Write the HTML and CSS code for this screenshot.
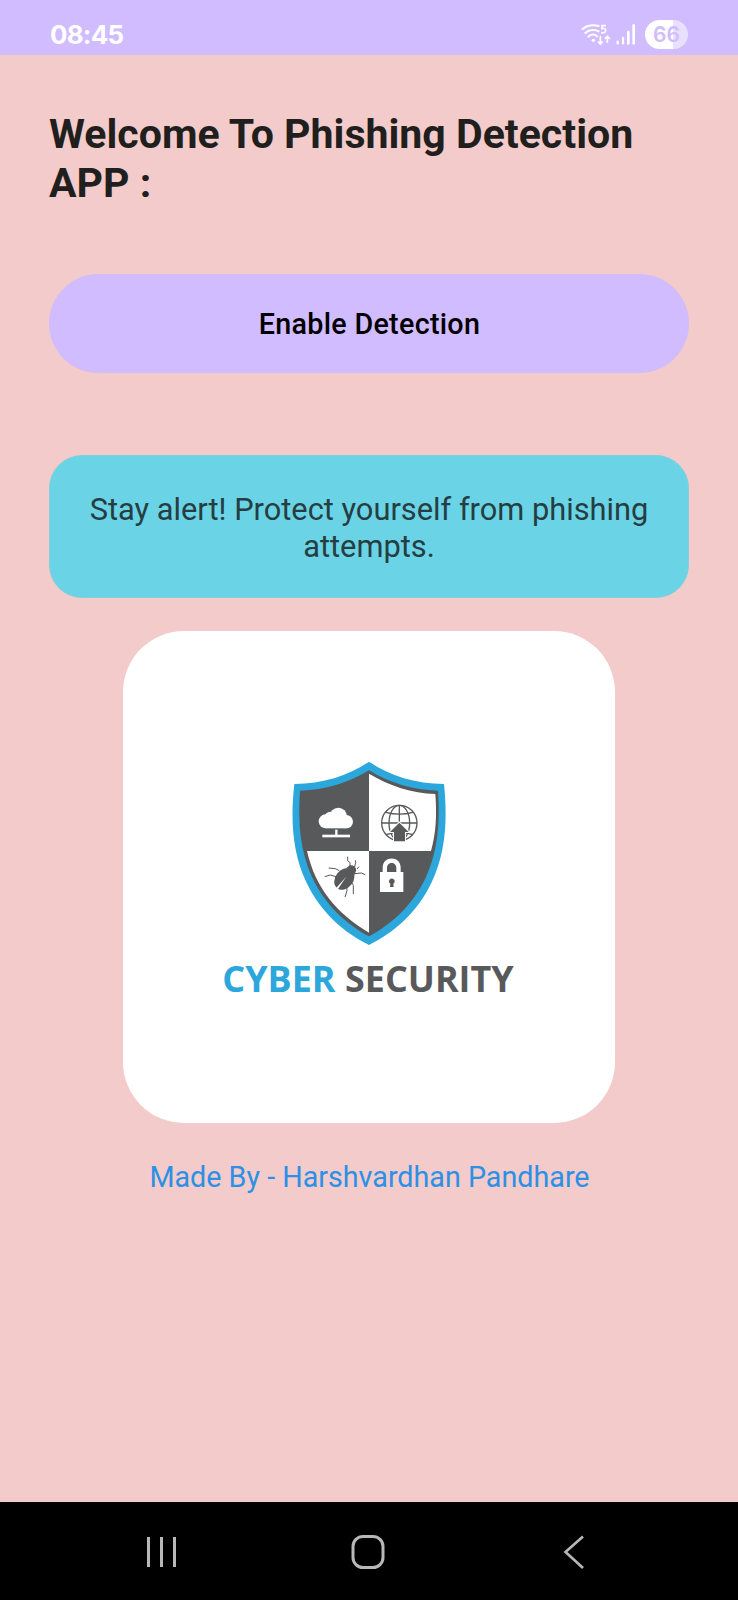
FILE: index.html
```html
<!DOCTYPE html>
<html lang="en">
<head>
<meta charset="utf-8">
<title>Phishing Detection</title>
<link rel="stylesheet" href="styles.css">
</head>
<body>
<div class="screen">
  <header class="status">
    <span class="clock">08:45</span>
    <div class="indicators">
      <svg class="wifi" viewBox="0 0 90 70" width="30" height="23.33">
        <g fill="none" stroke="#fff" stroke-width="6" stroke-linecap="round">
          <path d="M5 15C17 4 37 1 53 6"/>
          <path d="M13 27C23 17 42 15 53 22"/>
          <path d="M22 38C29 30 41 30 48 37"/>
          <path d="M58 38V59M52 54l6 6 6-6" stroke-width="5"/>
          <path d="M79 54V38M73 43l6-6 6 6" stroke-width="5"/>
        </g>
        <circle cx="37" cy="49" r="5" fill="#fff"/>
        <path d="M75 5H63V14Q75 12 74 20Q73 28 60 26" fill="none" stroke="#fff" stroke-width="5"/>
      </svg>
      <svg class="signal" viewBox="0 0 60 66" width="20" height="22">
        <g stroke="#fff" stroke-linecap="round">
          <path d="M5 53v5" stroke-width="7"/>
          <path d="M21 42v16" stroke-width="7"/>
          <path d="M37 24v34" stroke-width="8"/>
          <path d="M53 4v54" stroke-width="8"/>
        </g>
      </svg>
      <span class="battery">66</span>
    </div>
  </header>
  <main class="content">
    <h1 class="title">Welcome To Phishing Detection APP :</h1>
    <button class="enable">Enable Detection</button>
    <p class="notice">Stay alert! Protect yourself from phishing attempts.</p>
    <section class="logo">
      <svg class="shield" viewBox="0 0 540 600" width="180" height="200">
        <path fill="#2ba7dc" d="M267 35C330 78 405 101 492 102C503 210 497 308 455 397C412 488 341 549 267 585C193 549 122 488 79 397C37 308 31 210 43 102C129 101 204 78 267 35Z"/>
        <path fill="#58595b" d="M267 61C329 99 399 120 474 122C481 220 473 303 438 381C398 466 336 522 267 559C198 522 136 466 96 381C61 303 53 220 60 122C135 120 205 99 267 61Z"/>
        <path fill="#fff" d="M267 71C328 108 395 129 466 132C471 197 468 251 453 303H267Z"/>
        <path fill="#fff" d="M267 303V548C170 491 106 414 81 303Z"/>
        <g fill="#fff">
          <circle cx="137" cy="214" r="21"/>
          <circle cx="151" cy="202" r="17"/>
          <circle cx="175" cy="199" r="26"/>
          <circle cx="199" cy="215" r="20"/>
          <rect x="137" y="205" width="62" height="30"/>
        </g>
        <path d="M169 239V256" stroke="#fff" stroke-width="7"/>
        <path d="M127 258H210" stroke="#fff" stroke-width="8"/>
        <g fill="none" stroke="#58595b" stroke-width="4">
          <circle cx="358" cy="219" r="53"/>
          <ellipse cx="358" cy="219" rx="31" ry="53"/>
          <path d="M358 166V272M305 219H411M317 187Q358 198 399 187M317 254Q358 242 399 254"/>
        </g>
        <path d="M358 218L386 246H375V274H342V246H330Z" fill="#58595b" stroke="#fff" stroke-width="6" paint-order="stroke"/>
        <g transform="translate(193 387) rotate(38)">
          <ellipse rx="27" ry="35" fill="#58595b"/>
          <path d="M-16-28Q0-38 16-28L12-43Q0-54-12-43Z" fill="#58595b"/>
          <path d="M0-9L-3 39H4Z" fill="#fff"/>
        </g>
        <g fill="none" stroke="#58595b" stroke-width="3" stroke-linejoin="round">
          <path d="M210 354V338L203 332V320"/>
          <path d="M224 351L227 337L226 331M231 357L237 350"/>
          <path d="M223 371L244 369L256 374"/>
          <path d="M178 362L166 356L146 354"/>
          <path d="M168 380L151 375L134 380"/>
          <path d="M212 392L220 406L220 432"/>
          <path d="M200 409L201 422L195 441"/>
        </g>
        <path fill="#fff" d="M300 366H308V353C308 316 362 316 362 353V366H370V426H300ZM321 366H349V354C349 334 321 334 321 354Z" fill-rule="evenodd"/>
        <path fill="#58595b" d="M331 401A8.500 8.500 0 1 1 340 401L341 411H330Z"/>
      </svg>
      <div class="wordmark"><span class="cyber">CYBER</span><span class="security">SECURITY</span></div>
    </section>
    <p class="credit">Made By - Harshvardhan Pandhare</p>
  </main>
  <nav class="navbar">
    <svg viewBox="0 0 34 36" width="34" height="36"><path d="M3.500 3V33M16.500 3V33M29.500 3V33" stroke="#b8b8b8" stroke-width="3"/></svg>
    <svg class="home" viewBox="0 0 36 36" width="36" height="36"><rect x="3" y="2.500" width="30" height="31" rx="10" fill="none" stroke="#b8b8b8" stroke-width="3"/></svg>
    <svg viewBox="0 0 24 36" width="24" height="36"><path d="M21 2.500L3.500 18L21 34" fill="none" stroke="#b8b8b8" stroke-width="2.600"/></svg>
  </nav>
</div>
</body>
</html>
```
FILE: styles.css
```css
* { box-sizing: border-box; }
body { margin: 0; font-family: Roboto, sans-serif; }
.screen { display: flex; flex-direction: column; width: 738px; height: 1600px; background: #f3cbca; }
.status { display: flex; justify-content: space-between; height: 55px; padding: 20px 50px 0 50px; background: #d0bcff; }
.clock { color: #fff; font: 700 26px/30px Inter, sans-serif; letter-spacing: -.8px; }
.indicators { display: flex; }
.wifi { margin: 4px 5px 0 0; }
.signal { margin: 4px 9px 0 0; }
.battery { width: 43px; height: 29px; border-radius: 15px; background: linear-gradient(90deg, #fff 66%, #e9dfff 66%); color: #d0bcff; font: 600 21px/29px Inter, sans-serif; text-align: center; }
.content { display: flex; flex: 1; flex-direction: column; align-items: center; padding: 55px 49px 0; }
.title { align-self: stretch; margin: 0; color: #211f1e; font-size: 41.05px; font-weight: 700; line-height: 49px; }
.enable { width: 640px; height: 99px; margin-top: 66px; padding: 1px 0 0 1px; border: 0; border-radius: 50px; background: #d0bcff; color: #000; font: 500 28.7px/34px Roboto, sans-serif; letter-spacing: .3px; }
.notice { width: 640px; height: 143px; margin: 82px 0 0; padding: 36px 30px; border: 1px solid #82d0dc; border-radius: 33px; background: #6ad4e6; color: #263d42; font-size: 30.8px; line-height: 36.5px; text-align: center; }
.logo { display: flex; flex-direction: column; align-items: center; width: 492px; height: 492px; margin-top: 33px; padding-top: 119px; border-radius: 61px; background: #fff; }
.shield { margin-left: 2px; }
.wordmark { display: flex; gap: 9.5px; margin: 5px 2px 0 0; font: 700 35.9px/48px "Open Sans", sans-serif; }
.cyber { color: #2ba7dc; }
.security { color: #58595b; }
.credit { margin: 37px 0 0; padding-left: 1px; color: #2b90e6; font-size: 28.7px; line-height: 34px; }
.navbar { display: flex; align-items: flex-start; height: 98px; padding: 32px 0 0 145px; background: #000; }
.home { margin: 0 176px 0 171px; }
```
